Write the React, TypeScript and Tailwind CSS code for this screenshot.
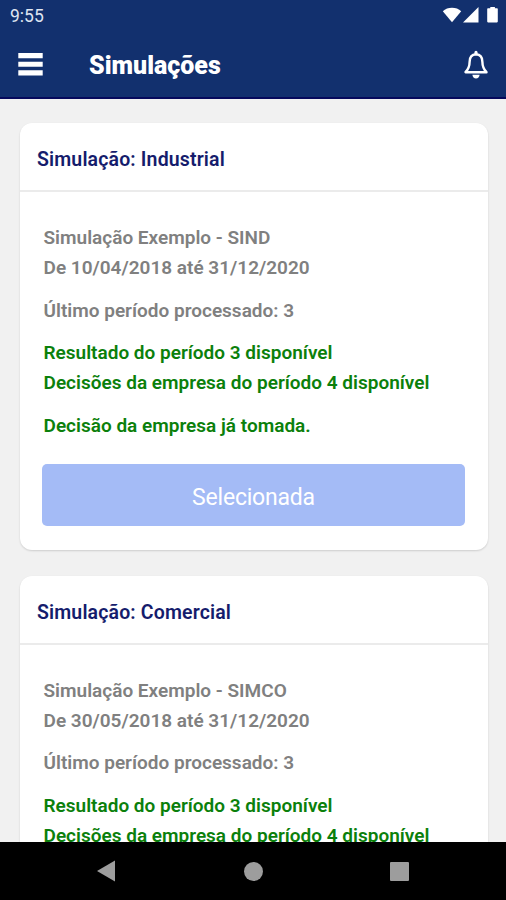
import React from "react";

interface Simulation {
  kind: string;
  name: string;
  range: string;
  lastPeriod: number;
  nextPeriod: number;
}

const simulations: Simulation[] = [
  { kind: "Industrial", name: "Simulação Exemplo - SIND", range: "De 10/04/2018 até 31/12/2020", lastPeriod: 3, nextPeriod: 4 },
  { kind: "Comercial", name: "Simulação Exemplo - SIMCO", range: "De 30/05/2018 até 31/12/2020", lastPeriod: 3, nextPeriod: 4 },
];

const StatusBar: React.FC = () => (
  <div className="flex h-8 items-center justify-between pl-2.5 pr-[7px]">
    <span className="text-[17.5px] leading-8 text-[#dfe5f2]">9:55</span>
    <svg width="57" height="18" viewBox="0 0 57 18" fill="#fff" className="-mt-0.5">
      {/* wifi */}
      <path d="M0.8 5.2C5.6 0.7 14.4 0.7 19.2 5.2L10 16.2Z" />
      {/* signal */}
      <path d="M36.5 1V16.4H21Z" />
      {/* battery */}
      <path d="M46 2.3h2.3V1h4.6v1.3H55a.8.8 0 0 1 .8.8v12.5a.8.8 0 0 1-.8.8h-9a.8.8 0 0 1-.8-.8V3.1a.8.8 0 0 1 .8-.8Z" />
    </svg>
  </div>
);

const AppBar: React.FC = () => (
  <div className="flex h-[65px] items-center pl-[18px] pr-[17px]">
    <svg width="25" height="23" viewBox="0 0 25 23" fill="#fff">
      <path d="M0.3 0H24.7V5.2H0.3ZM0.3 8.7H24.7V13.7H0.3ZM0.3 17.2H24.7V22.4H0.3Z" />
    </svg>
    <h1 className="ml-[46px] mt-[3px] flex-1 text-[25px] font-black leading-8 text-white">Simulações</h1>
    <svg width="26" height="30" viewBox="0 0 26 30" fill="none">
      <path
        d="M13 4.3C8.6 4.5 6.6 7.8 6.6 12C6.6 17.6 5 19.6 2.5 22.2H23.5C21 19.6 19.4 17.6 19.4 12C19.4 7.8 17.4 4.5 13 4.3Z"
        stroke="#fff"
        strokeWidth="2.4"
        strokeLinejoin="round"
      />
      <path d="M11.4 4.4V2.4a1.6 1.6 0 0 1 3.2 0V4.4Z" fill="#fff" />
      <path d="M9.4 24.8H16.6C16.4 27.2 15 28.4 13 28.4C11 28.4 9.6 27.2 9.4 24.8Z" fill="#fff" />
    </svg>
  </div>
);

const SimulationCard: React.FC<{ item: Simulation }> = ({ item }) => (
  <section className="h-[427px] shrink-0 rounded-[12px] bg-white shadow-[0_1px_2px_rgba(0,0,0,0.15)]">
    <h2 className="h-[69px] border-b-2 border-[#ebebeb] pl-[17px] pt-[5px] text-[19.5px] font-semibold leading-[64px] tracking-[0.15px] text-[#151c6c]">
      Simulação: {item.kind}
    </h2>
    <div className="pl-[22px] pr-[23px] pt-[31px]">
      <div className="flex flex-col gap-[12.5px] pl-[1.5px] text-[19px] font-semibold leading-[30px] text-[#808080]">
        <div>
          <p>{item.name}</p>
          <p>{item.range}</p>
        </div>
        <p>Último período processado: {item.lastPeriod}</p>
        <div className="text-[#0b800b]">
          <p>Resultado do período {item.lastPeriod} disponível</p>
          <p>Decisões da empresa do período {item.nextPeriod} disponível</p>
        </div>
        <p className="text-[#0b800b]">Decisão da empresa já tomada.</p>
      </div>
      <button className="mt-[23.5px] h-[61.5px] w-full rounded-[5px] bg-[#a4bbf6] pt-1.5 text-[23px] tracking-[-0.2px] text-white">
        Selecionada
      </button>
    </div>
  </section>
);

const NavigationBar: React.FC = () => (
  <nav className="flex h-[58px] shrink-0 items-center justify-between bg-black pl-[96px] pr-[97px]">
    <svg width="20" height="22" viewBox="0 0 20 22" fill="#9d9d9d">
      <path d="M19 0.5V21.5L1 11Z" />
    </svg>
    <span className="size-[19px] rounded-full bg-[#9d9d9d]" />
    <span className="size-[19px] rounded-[1px] bg-[#9d9d9d]" />
  </nav>
);

export default function App() {
  return (
    <div className="flex h-[900px] w-[506px] flex-col overflow-hidden bg-[#f1f1f1] font-['Roboto',sans-serif]">
      <header className="h-[99px] shrink-0 border-b-2 border-[#06095c] bg-[#12306e]">
        <StatusBar />
        <AppBar />
      </header>
      <main className="flex min-h-0 flex-1 flex-col gap-[25.4px] overflow-hidden pl-5 pr-[18px] pt-[24.3px]">
        {simulations.map((item) => (
          <SimulationCard key={item.kind} item={item} />
        ))}
      </main>
      <NavigationBar />
    </div>
  );
}
